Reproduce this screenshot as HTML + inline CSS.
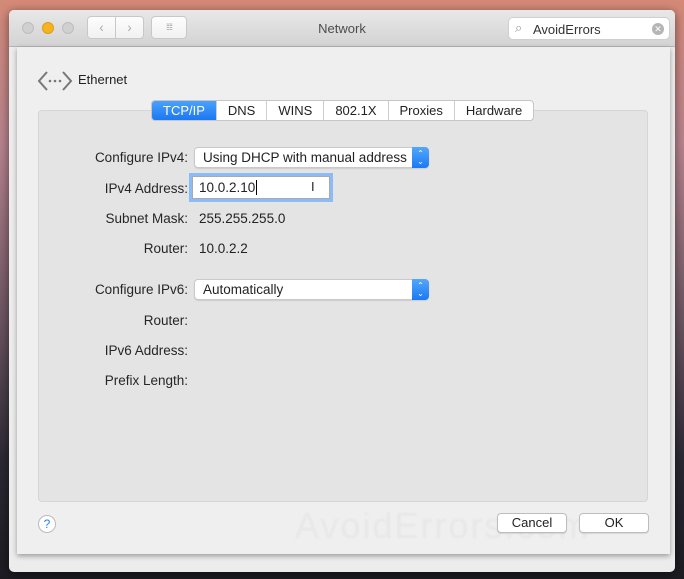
<!DOCTYPE html>
<html><head><meta charset="utf-8"><style>
*{box-sizing:border-box;margin:0;padding:0}
body{width:684px;height:579px;overflow:hidden;position:relative;font-family:"Liberation Sans",sans-serif;font-size:13.5px;color:#222;
background:linear-gradient(180deg,#d58a78 0%,#b7838f 25%,#6b5561 55%,#2b2833 80%,#1c1c22 100%)}
.win{position:absolute;left:9px;top:10px;width:666px;height:562px;background:#ececec;border-radius:5px;box-shadow:0 2px 10px rgba(0,0,0,.5)}
.tb{position:absolute;left:0;top:0;width:666px;height:37px;background:linear-gradient(#e8e8e8,#d3d3d3);border-bottom:1px solid #b5b5b5;border-radius:5px 5px 0 0}
.dot{position:absolute;top:12px;width:12px;height:12px;border-radius:50%;background:#d0d0d0;border:1px solid #bdbdbd}
.btn{position:absolute;background:linear-gradient(#fdfdfd,#f1f1f1);border:1px solid #c8c8c8;border-radius:4px}
.title{position:absolute;left:0;width:666px;top:11px;text-align:center;color:#4d4d4d;font-size:13px}
.search{position:absolute;left:499px;top:7px;width:162px;height:23px;background:#fff;border:1px solid #cfcfcf;border-radius:5px}
.sheet{position:absolute;left:8px;top:37px;width:653px;height:507px;background:#efefef;box-shadow:0 2px 5px rgba(0,0,0,.35)}
.box{position:absolute;left:29px;top:100px;width:610px;height:392px;background:#e4e4e4;border:1px solid #d6d6d6;border-radius:4px}
.tabs{position:absolute;left:151px;top:100px;height:21px;display:flex;background:#fff;border:1px solid #c6c6c6;border-radius:4px;overflow:hidden}
.tabs div{padding:0 11px;line-height:19px;border-left:1px solid #cfcfcf;font-size:13px}
.tabs div:first-child{border:none;background:linear-gradient(#4aa1fb,#1c77f2);color:#fff}
.lbl{position:absolute;right:496px;color:#262626}
.val{position:absolute;left:199px}
.pop{position:absolute;left:194px;width:235px;height:21px;background:#fff;border:1px solid #c9c9c9;border-radius:4px;box-shadow:0 1px 1px rgba(0,0,0,.1)}
.pop span{position:absolute;left:8px;top:2px}
.pop i{position:absolute;right:-1px;top:-1px;width:17px;height:21px;background:linear-gradient(#53a8fb,#1c79f2);border-radius:0 4px 4px 0;color:#fff;font-style:normal;font-size:8px;line-height:8px;text-align:center;padding-top:3px}
.b2{position:absolute;top:513px;height:20px;background:#fff;border:1px solid #bdbdbd;border-radius:4px;text-align:center;line-height:18px;box-shadow:0 1px 1px rgba(0,0,0,.1);font-size:13px}
</style></head><body>
<div class="win">
 <div class="tb">
  <div class="dot" style="left:13px"></div>
  <div class="dot" style="left:33px;background:#f4b41f;border-color:#dc9f14"></div>
  <div class="dot" style="left:53px"></div>
  <div class="btn" style="left:78px;top:6px;width:29px;height:23px;border-radius:4px 0 0 4px;color:#aaa;text-align:center;line-height:21px">&#x2039;</div>
  <div class="btn" style="left:106px;top:6px;width:29px;height:23px;border-radius:0 4px 4px 0;color:#aaa;text-align:center;line-height:21px">&#x203A;</div>
  <div class="btn" style="left:142px;top:6px;width:36px;height:23px;color:#999;font-size:9px;text-align:center;line-height:21px;letter-spacing:-1px">⁞⁞⁞⁞</div>
  <div class="title">Network</div>
  <div class="search"><span style="position:absolute;left:6px;top:2px;color:#999;font-size:13px">&#x2315;</span><span style="position:absolute;left:24px;top:4px;font-size:13px;color:#333">AvoidErrors</span><span style="position:absolute;right:5px;top:5px;width:12px;height:12px;border-radius:50%;background:#b5b5b5;color:#fff;font-size:9px;line-height:12px;text-align:center">✕</span></div>
 </div>
 <div class="sheet">
  <svg style="position:absolute;left:20px;top:22px" width="36" height="24" viewBox="0 0 36 24"><path d="M10 3 L2 12 L10 21 M26 3 L34 12 L26 21" fill="none" stroke="#777" stroke-width="2"/><circle cx="13" cy="12" r="1.3" fill="#777"/><circle cx="18" cy="12" r="1.3" fill="#777"/><circle cx="23" cy="12" r="1.3" fill="#777"/></svg>
  <div style="position:absolute;left:61px;top:25px;font-size:13px">Ethernet</div>
 </div>
</div>
<div class="box" style="left:38px;top:110px"></div>
<div class="tabs" style="left:151px;top:100px"><div>TCP/IP</div><div>DNS</div><div>WINS</div><div>802.1X</div><div>Proxies</div><div>Hardware</div></div>
<div class="lbl" style="top:150px">Configure IPv4:</div>
<div class="pop" style="top:147px"><span>Using DHCP with manual address</span><i>&#x2303;<br>&#x2304;</i></div>
<div class="lbl" style="top:181px">IPv4 Address:</div>
<div style="position:absolute;left:192px;top:176px;width:138px;height:23px;background:#fff;border:1px solid #aaa;box-shadow:0 0 0 3px #8cbcf7"><span style="position:absolute;left:6px;top:3px">10.0.2.10<span style="border-left:1px solid #000;margin-left:1px"></span></span><span style="position:absolute;left:118px;top:2px;font-size:13px">I</span></div>
<div class="lbl" style="top:211px">Subnet Mask:</div><div class="val" style="top:211px">255.255.255.0</div>
<div class="lbl" style="top:241px">Router:</div><div class="val" style="top:241px">10.0.2.2</div>
<div class="lbl" style="top:282px">Configure IPv6:</div>
<div class="pop" style="top:279px"><span>Automatically</span><i>&#x2303;<br>&#x2304;</i></div>
<div class="lbl" style="top:313px">Router:</div>
<div class="lbl" style="top:343px">IPv6 Address:</div>
<div class="lbl" style="top:373px">Prefix Length:</div>
<div style="position:absolute;left:38px;top:515px;width:18px;height:18px;border-radius:50%;background:#fff;border:1px solid #bbb;color:#2b7ff0;text-align:center;line-height:16px;font-size:12px">?</div>
<div style="position:absolute;left:295px;top:505px;font-size:36px;color:rgba(255,255,255,.35);letter-spacing:2px;text-shadow:0 0 1px rgba(0,0,0,.08)">AvoidErrors.com</div>
<div class="b2" style="left:497px;width:70px">Cancel</div>
<div class="b2" style="left:579px;width:70px">OK</div>
</body></html>
